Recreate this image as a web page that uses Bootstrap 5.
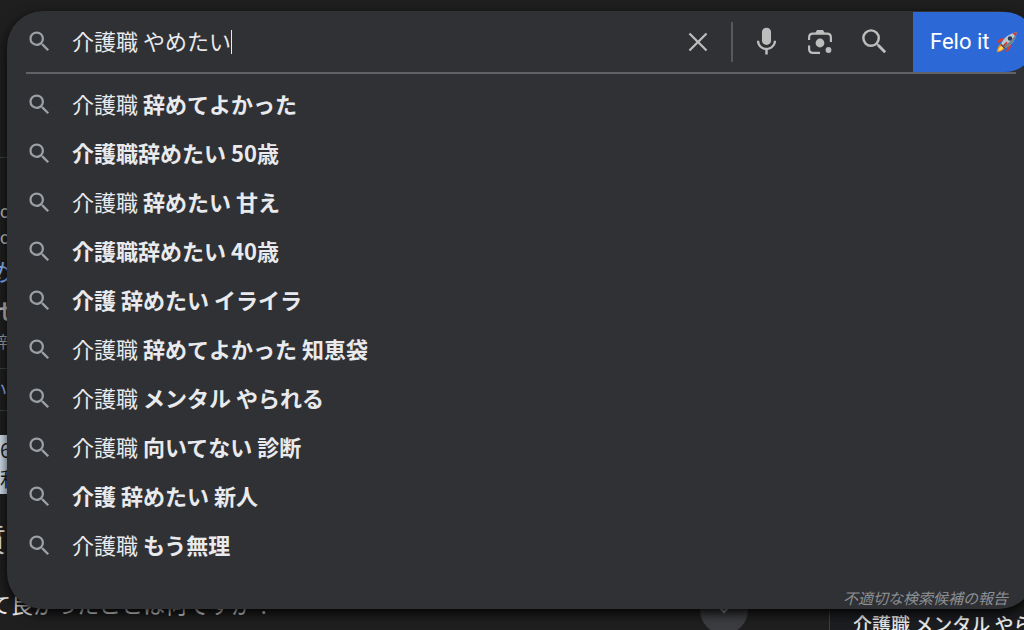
<!DOCTYPE html>
<html lang="ja" data-bs-theme="dark">
<head>
<meta charset="utf-8">
<meta name="viewport" content="width=device-width, initial-scale=1">
<title>介護職 やめたい</title>
<link href="https://cdn.jsdelivr.net/npm/bootstrap@5.3.0/dist/css/bootstrap.min.css" rel="stylesheet">
<style>
  body { background: #1f1f1f; color: #e8e8e8; font-family: "Noto Sans CJK JP", sans-serif; font-size: 22px; }
  .page-view { height: 100vh; }
  .rule-row { border-bottom: 1px solid #3c4043; }
  .top-space { height: 158px; }
  .site-lines { padding-top: 41px; }
  .site-name { font: 18px/26px Roboto, sans-serif; color: #bdbdbd; }
  .result-title { font-size: 24px; line-height: 40px; padding-bottom: 4px; color: #8ab4f8; text-indent: -12px; }
  .result-head { font-size: 22px; line-height: 28px; padding-bottom: 4px; text-indent: -2px; color: #bdbdbd; }
  .result-note { font-size: 16px; line-height: 28px; padding-bottom: 13px; text-indent: -8px; color: #9e9e9e; }
  .result-link { font-size: 18px; line-height: 41px; text-indent: -11px; color: #8ab4f8; }
  .snippet { background: #d2dfec; color: #1f1f1f; font-size: 20px; line-height: 29px; margin-top: 24px; height: 59px; }
  .question-title { font-size: 30px; line-height: 88px; padding-bottom: 4px; text-indent: -24px; }
  .question { line-height: 34px; text-indent: -11px; }
  .side-column { width: 195px; background: #1c1d21; border-left: 1px solid #3c4043; padding-left: 23px; font-size: 19px; line-height: 28px; font-weight: 500; }
  .more-button { width: 48px; height: 48px; background: #3c3d40; margin-right: 81px; }

  .suggest-panel { left: 7px; right: -11px; top: 11px; background: #303134; border-radius: 36px; box-shadow: 0 4px 12px 2px rgba(0,0,0,.5), 0 6px 8px -4px rgba(0,0,0,.7); color: #e8eaed; }
  .query-row { height: 61px; }
  .query-row, .suggestions a { padding-left: 19px; }
  .query-rule { height: 2px; background: #5f6368; margin: 0 19px; }
  .glass { width: 27px; height: 27px; fill: #9aa0a6; margin-right: 19px; flex: none; }
  .query-input { width: 159px; height: 32px; border: 0; padding: 0 0 3px; background: transparent; color: #e8eaed; outline: 0; }
  .caret { width: 1px; height: 24px; background: #e8eaed; }
  .tool-btn { border: 0; padding: 0; background: transparent; display: flex; align-items: center; justify-content: center; width: 54px; height: 54px; fill: #bdbdbd; }
  .tool-divider { width: 2px; height: 40px; background: #55585c; margin: 0 6px; }
  .felo-btn { width: 122px; height: 60px; margin-left: 12px; padding: 0 0 0 17px; border: 0; border-radius: 0 30px 30px 0; background: #2c69d6; color: #fff; font: 22px Roboto, sans-serif; gap: 6px; }
  .suggestions { padding-top: 6px; }
  .suggestions a { height: 49px; color: #e8eaed; }
  .suggestions a span { padding-bottom: 3px; }
  .report { font-size: 15px; line-height: 22px; color: #8d9095; padding: 17px 27px 0 0; }
</style>
</head>
<body class="overflow-hidden">
<main class="page-view position-relative overflow-hidden">
  <div class="text-nowrap" aria-hidden="true">
    <div class="rule-row top-space"></div>
    <div class="rule-row site-lines">
      <div class="site-name">co</div>
      <div class="site-name">co</div>
      <div class="result-title">め</div>
      <div class="result-head fw-bold">せ</div>
      <div class="result-note">辞</div>
    </div>
    <div class="rule-row result-link">い</div>
    <div class="snippet"><div>6</div><div>利</div></div>
    <div class="question-title">質</div>
    <div class="d-flex">
      <div class="question flex-grow-1">て良かったことは何ですか？</div>
      <div class="more-button rounded-circle"><svg class="d-block mx-auto" width="24" height="32" viewBox="0 0 24 32"><path d="m6 20 6 6 6-6" fill="none" stroke="#9aa0a6" stroke-width="2"/></svg></div>
      <div class="side-column mt-4">介護職 メンタル やられる</div>
    </div>
  </div>

  <section class="suggest-panel position-absolute">
    <form class="query-row d-flex align-items-center" role="search">
      <svg class="glass" viewBox="0 0 24 24"><path d="M15.5 14h-.79l-.28-.27A6.47 6.47 0 0 0 16 9.5 6.5 6.5 0 1 0 9.5 16c1.61 0 3.09-.59 4.23-1.57l.27.28v.79l5 4.99L20.49 19l-4.99-5zm-6 0a4.5 4.5 0 1 1 0-9 4.5 4.5 0 0 1 0 9z"/></svg>
      <input class="query-input" type="text" aria-label="検索" value="介護職 やめたい">
      <span class="caret"></span>
      <button class="tool-btn ms-auto" type="button" aria-label="クリア"><svg width="32" height="32" viewBox="0 0 24 24"><path d="M19 6.200 17.800 5 12 10.800 6.200 5 5 6.200l5.800 5.800L5 17.800 6.200 19l5.800-5.800 5.800 5.800 1.200-1.200-5.800-5.800z"/></svg></button>
      <span class="tool-divider"></span>
      <button class="tool-btn" type="button" aria-label="音声で検索"><svg width="33" height="33" viewBox="0 0 24 24"><path d="M12 14.500c1.900 0 3.300-1.300 3.300-3V5c0-1.700-1.400-3-3.300-3S8.700 3.300 8.700 5v6.500c0 1.700 1.400 3 3.300 3z"/><path d="M17.300 11.500c0 3-2.400 5.100-5.300 5.100s-5.300-2.100-5.300-5.100H5c0 3.400 2.700 6.200 6.100 6.700v3.300h1.800v-3.300c3.400-.5 6.100-3.300 6.100-6.700z"/></svg></button>
      <button class="tool-btn" type="button" aria-label="画像で検索"><svg width="26" height="26" viewBox="0 0 26 26"><g fill="none" stroke="#bdbdbd" stroke-width="2.2"><path d="M2.100 11V8.500Q2.100 4.600 6 4.600H20Q23.900 4.600 23.900 8.500V13"/><path d="M2.100 16.500V20Q2.100 23.900 6 23.900H13"/></g><path d="M8 4.500 10 1h6l2 3.500z"/><circle cx="13" cy="14" r="4.400"/><circle cx="21.500" cy="21" r="2.900"/></svg></button>
      <button class="tool-btn" type="submit" aria-label="検索"><svg width="33" height="33" viewBox="0 0 24 24"><path d="M15.500 14h-.79l-.28-.27A6.470 6.470 0 0 0 16 9.500 6.500 6.500 0 1 0 9.500 16c1.610 0 3.090-.59 4.230-1.570l.27.28v.79l5 4.990L20.490 19l-4.990-5zm-6 .2a4.700 4.700 0 1 1 0-9.400 4.700 4.700 0 0 1 0 9.400z"/></svg></button>
      <button class="felo-btn d-flex align-items-center" type="button">Felo it
        <svg width="22" height="22" viewBox="0 0 22 22"><path d="M6 10 1 12.500 1.500 10 5 7.500 9 7zM12 16l-2.500 5 2.500-1 2.500-3.500.5-4z" fill="#e2382b"/><path d="M5.500 12.500Q1.500 14.500.6 21.300 7 20.500 9.500 16.500z" fill="#f5862c"/><path d="M5.500 14.500Q3 16.500 2 20q4-.8 6-3.500z" fill="#ffe14d"/><path d="M5 12.500Q9 3.500 20.800 1 19.500 12 9.700 17z" fill="#b9c7d1"/><path d="M7.500 15 9.700 17Q19.500 12 20.800 1 17 10 7.500 15z" fill="#71828f"/><path d="M16.500 2.300 20.800 1l-1 4.500z" fill="#d63a35"/><circle cx="14" cy="7.500" r="2.200" fill="#263d55"/><path d="m5 12.500 4.700 4.500-1.500.7L4.500 14z" fill="#46515c"/><path d="m7 15.500 4-4.300" stroke="#c9312b" stroke-width="1.500"/></svg>
      </button>
    </form>
    <div class="query-rule"></div>
    <nav class="suggestions d-flex flex-column" aria-label="検索候補"></nav>
    <div class="report fst-italic text-end">不適切な検索候補の報告</div>
  </section>
</main>
<script src="https://cdn.jsdelivr.net/npm/bootstrap@5.3.0/dist/js/bootstrap.bundle.min.js"></script>
<script>
  // [typed part, completed part shown in bold]
  const items = [
    ["介護職 ", "辞めてよかった"], ["", "介護職辞めたい 50歳"], ["介護職 ", "辞めたい 甘え"],
    ["", "介護職辞めたい 40歳"], ["", "介護 辞めたい イライラ"], ["介護職 ", "辞めてよかった 知恵袋"],
    ["介護職 ", "メンタル やられる"], ["介護職 ", "向いてない 診断"], ["", "介護 辞めたい 新人"], ["介護職 ", "もう無理"]
  ];
  const glass = document.querySelector(".glass").outerHTML;
  document.querySelector(".suggestions").innerHTML = items.map(([typed, rest]) =>
    `<a href="#" class="d-flex align-items-center text-decoration-none">${glass}<span>${typed}<b>${rest}</b></span></a>`).join("");
</script>
</body>
</html>
